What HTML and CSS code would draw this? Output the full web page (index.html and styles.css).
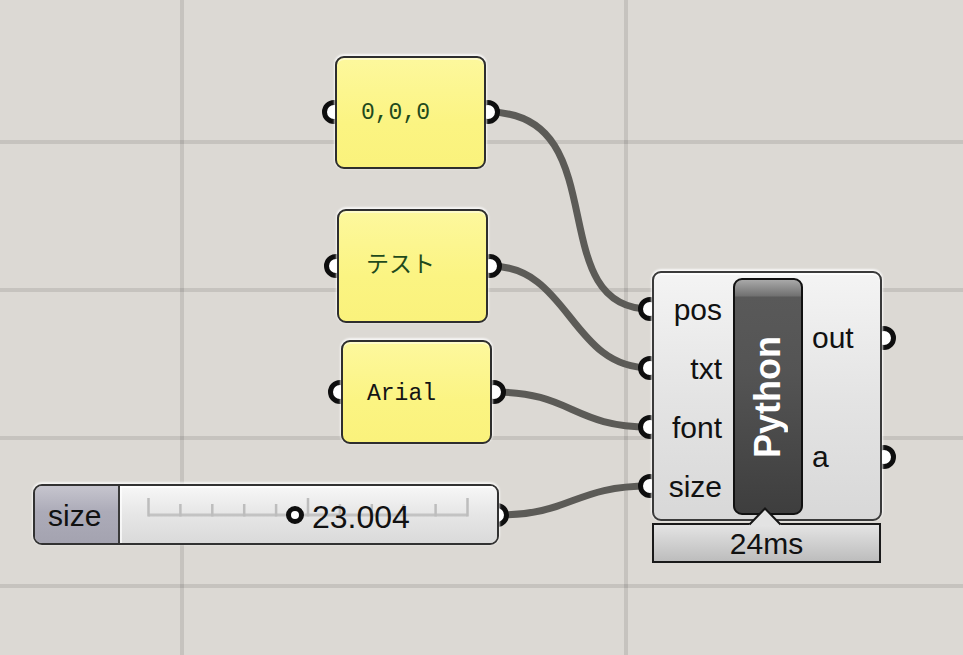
FILE: index.html
```html
<!DOCTYPE html>
<html lang="ja">
<head>
<meta charset="utf-8">
<title>Grasshopper – Python</title>
<link rel="stylesheet" href="styles.css">
</head>
<body>
<div class="canvas">
  <svg class="wires" width="963" height="655" viewBox="0 0 963 655">
    <g class="wire">
      <path d="M488 112 C618 112 540 309 650 309"/>
      <path d="M490 266 C570 266 570 368 650 368"/>
      <path d="M494 392 C572 392 572 427 650 427"/>
      <path d="M497 515 C573 515 573 486 650 486"/>
    </g>
    <g class="grip">
      <circle cx="334" cy="112" r="9.5"/>
      <circle cx="488" cy="112" r="9.5"/>
      <circle cx="336" cy="266" r="9.5"/>
      <circle cx="490" cy="266" r="9.5"/>
      <circle cx="340" cy="392" r="9.5"/>
      <circle cx="494" cy="392" r="9.5"/>
      <circle cx="497" cy="515" r="9.5"/>
      <circle cx="650" cy="309" r="9.5"/>
      <circle cx="650" cy="368" r="9.5"/>
      <circle cx="650" cy="427" r="9.5"/>
      <circle cx="650" cy="486" r="9.5"/>
      <circle cx="884" cy="338" r="9.5"/>
      <circle cx="884" cy="457" r="9.5"/>
    </g>
  </svg>

  <div class="panel p1"><span class="code green">0,0,0</span></div>
  <div class="panel p2"><span class="jp green">テスト</span></div>
  <div class="panel p3"><span class="code">Arial</span></div>

  <div class="slider">
    <div class="slider-label">size</div>
    <div class="slider-body">
      <svg class="ticks" width="377" height="57" viewBox="0 0 377 57">
        <line class="rail" x1="28.5" y1="29" x2="347.5" y2="29"/>
        <line class="major" x1="28.5" y1="12" x2="28.5" y2="30.5"/>
        <line class="minor" x1="60.4" y1="18" x2="60.4" y2="30.5"/>
        <line class="minor" x1="92.3" y1="18" x2="92.3" y2="30.5"/>
        <line class="minor" x1="124.2" y1="18" x2="124.2" y2="30.5"/>
        <line class="minor" x1="156.1" y1="18" x2="156.1" y2="30.5"/>
        <line class="major" x1="188" y1="12" x2="188" y2="30.5"/>
        <line class="minor" x1="219.9" y1="18" x2="219.9" y2="30.5"/>
        <line class="minor" x1="251.8" y1="18" x2="251.8" y2="30.5"/>
        <line class="minor" x1="283.7" y1="18" x2="283.7" y2="30.5"/>
        <line class="minor" x1="315.6" y1="18" x2="315.6" y2="30.5"/>
        <line class="major" x1="347.5" y1="12" x2="347.5" y2="30.5"/>
      </svg>
      <span class="knob"></span>
      <span class="value">23.004</span>
    </div>
  </div>

  <div class="comp">
    <div class="inputs">
      <span>pos</span>
      <span>txt</span>
      <span>font</span>
      <span>size</span>
    </div>
    <div class="bar"><span class="bar-title">Python</span></div>
    <div class="outputs">
      <span>out</span>
      <span>a</span>
    </div>
  </div>

  <div class="timer">24ms</div>
  <svg class="pointer" width="34" height="20" viewBox="0 0 34 20">
    <polygon points="17,2 0.5,19.5 33.5,19.5" fill="#e3e3e3"/>
    <polyline points="1.5,18.5 17,2.5 32.5,18.5" fill="none" stroke="#151515" stroke-width="2"/>
  </svg>
</div>
</body>
</html>
```

FILE: styles.css
```css
* {
  box-sizing: border-box;
}

html,
body {
  margin: 0;
  padding: 0;
}

body {
  width: 963px;
  height: 655px;
  overflow: hidden;
  background: #dcd9d4;
  font-family: "Liberation Sans", Arial, sans-serif;
  color: #111;
}

.canvas {
  position: relative;
  width: 963px;
  height: 655px;
  background-color: #dcd9d4;
  background-image:
    linear-gradient(rgba(0, 0, 0, 0.1), rgba(0, 0, 0, 0.1)),
    linear-gradient(rgba(0, 0, 0, 0.1), rgba(0, 0, 0, 0.1)),
    linear-gradient(rgba(0, 0, 0, 0.1), rgba(0, 0, 0, 0.1)),
    linear-gradient(rgba(0, 0, 0, 0.1), rgba(0, 0, 0, 0.1)),
    linear-gradient(rgba(0, 0, 0, 0.1), rgba(0, 0, 0, 0.1)),
    linear-gradient(rgba(0, 0, 0, 0.1), rgba(0, 0, 0, 0.1));
  background-repeat: no-repeat;
  background-size: 4px 100%, 4px 100%, 100% 4px, 100% 4px, 100% 4px, 100% 4px;
  background-position: 180px 0, 624px 0, 0 140px, 0 288px, 0 436px, 0 584px;
}

/* wires + grips */
.wires {
  position: absolute;
  left: 0;
  top: 0;
}

.wire path {
  fill: none;
  stroke: #5c5b57;
  stroke-width: 7;
  stroke-linecap: round;
}

.grip circle {
  fill: #ffffff;
  stroke: #0e0e0e;
  stroke-width: 5;
}

/* panels */
.panel {
  position: absolute;
  width: 151px;
  display: flex;
  align-items: center;
  border: 2.5px solid #2e2e2e;
  border-radius: 9px;
  background: linear-gradient(#fdf89d, #fbf482 60%, #faf27c);
  box-shadow: 0 -1px 2px 1px rgba(255, 255, 255, 0.75), inset 0 2px 0 rgba(255, 255, 255, 0.45);
}

.p1 {
  left: 335px;
  top: 56px;
  height: 113px;
  padding-left: 24px;
}

.p2 {
  left: 337px;
  top: 209px;
  height: 114px;
  padding-left: 27px;
  padding-bottom: 9px;
}

.p3 {
  left: 341px;
  top: 340px;
  height: 104px;
  padding-left: 24px;
  padding-top: 3px;
}

.code {
  font-family: "Liberation Mono", "DejaVu Sans Mono", monospace;
  font-size: 23px;
  color: #141414;
}

.jp {
  font-family: "Noto Sans CJK JP", "Noto Sans", sans-serif;
  font-size: 23px;
}

.green {
  color: #1f4a1c;
}

/* slider */
.slider {
  position: absolute;
  left: 33px;
  top: 484px;
  width: 466px;
  height: 61px;
  display: flex;
  overflow: hidden;
  border: 2.5px solid #323232;
  border-radius: 9px;
  box-shadow: 0 -1px 2px 1px rgba(255, 255, 255, 0.7);
}

.slider-label {
  width: 85px;
  display: flex;
  align-items: center;
  padding-left: 13px;
  padding-top: 3px;
  font-size: 30px;
  color: #111;
  background: linear-gradient(#c6c5ce, #acabb8 45%, #a4a3b0);
  border-right: 2px solid #3a3a3a;
}

.slider-body {
  flex: 1;
  position: relative;
  display: flex;
  align-items: center;
  padding-left: 166px;
  background: linear-gradient(#f7f7f7, #e6e6e6 50%, #dadada);
  box-shadow: inset 0 2px 0 rgba(255, 255, 255, 0.8), inset 2px 0 0 rgba(255, 255, 255, 0.7);
}

.ticks {
  position: absolute;
  left: 0;
  top: 0;
}

.ticks line {
  stroke: #bdbdbd;
  stroke-width: 2.5;
}

.ticks .rail {
  stroke: #c3c3c3;
  stroke-width: 3;
}

.knob {
  position: relative;
  width: 18px;
  height: 18px;
  border: 5px solid #0e0e0e;
  border-radius: 50%;
  background: #fff;
}

.value {
  position: relative;
  margin-left: 8px;
  margin-top: 6px;
  font-size: 32px;
  color: #111;
}

/* python component */
.comp {
  position: absolute;
  left: 652px;
  top: 271px;
  width: 230px;
  height: 250px;
  display: flex;
  border: 2px solid #3a3a3a;
  border-radius: 9px;
  background: linear-gradient(#f4f4f4, #e4e4e4 50%, #d8d8d8);
  box-shadow: 0 -1px 2px 1px rgba(255, 255, 255, 0.8), inset 0 2px 0 rgba(255, 255, 255, 0.7);
}

.inputs {
  width: 79px;
  display: flex;
  flex-direction: column;
  align-items: flex-end;
  padding-right: 11px;
  padding-top: 7px;
  font-size: 30px;
  line-height: 59px;
}

.outputs {
  flex: 1;
  display: flex;
  flex-direction: column;
  padding-left: 9px;
  padding-top: 5px;
  font-size: 30px;
  line-height: 119px;
}

.bar {
  width: 70px;
  margin: 5px 0 4px;
  display: flex;
  align-items: center;
  justify-content: center;
  border: 2px solid #111;
  border-radius: 9px;
  background: linear-gradient(#a8a8a8 0, #707070 16px, #595959 17px, #545454 40%, #3e3e3e 100%);
}

.bar-title {
  writing-mode: vertical-rl;
  transform: rotate(180deg);
  font-size: 36px;
  font-weight: bold;
  color: #ffffff;
}

/* timing label */
.timer {
  position: absolute;
  left: 652px;
  top: 523px;
  width: 229px;
  height: 40px;
  padding-top: 2px;
  border: 2px solid #1a1a1a;
  background: linear-gradient(#e4e4e4, #d0d0d0 50%, #bdbdbd);
  text-align: center;
  font-size: 30px;
  line-height: 34px;
  color: #111;
}

.pointer {
  position: absolute;
  left: 748px;
  top: 506px;
}
```
